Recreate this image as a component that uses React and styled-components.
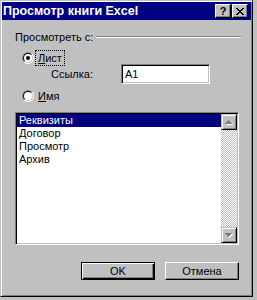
import React from "react";
import styled, { createGlobalStyle } from "styled-components";

const GlobalStyle = createGlobalStyle`
  body {
    margin: 0;
    background: #c0c0c0;
    font-family: "Liberation Sans", Arial, sans-serif;
    font-size: 11px;
    color: #000;
  }
`;

const Dialog = styled.div`
  width: 253px;
  height: 297px;
  box-sizing: border-box;
  border: 1px solid;
  border-color: #c0c0c0 #000 #000 #c0c0c0;
  box-shadow: inset 1px 1px #fff, inset -1px -1px #808080;
  padding: 1px;
  background: #c0c0c0;
  display: flex;
  flex-direction: column;
`;

const TitleBar = styled.div`
  height: 18px;
  flex: none;
  background: #000080;
  color: #fff;
  font-weight: bold;
  font-size: 12.5px;
  display: flex;
  align-items: center;
  padding: 0 3px 0 1px;
`;

const TitleText = styled.span`
  white-space: nowrap;
`;

const CaptionButtons = styled.div`
  margin-left: auto;
  display: flex;
  gap: 1px;
`;

const CaptionButton = styled.div`
  width: 16px;
  height: 14px;
  box-sizing: border-box;
  background: #c0c0c0;
  border: 1px solid;
  border-color: #fff #000 #000 #fff;
  box-shadow: inset -1px -1px #808080;
  color: #000;
  font-size: 11px;
  font-weight: bold;
  line-height: 12px;
  display: flex;
  align-items: center;
  justify-content: center;
`;

const Body = styled.div`
  flex: 1;
  display: flex;
  flex-direction: column;
  padding: 0 12px 0 13px;
`;

const GroupHeader = styled.div`
  margin-top: 10px;
  height: 14px;
  display: flex;
  align-items: center;
  margin-right: -2px;
`;

const GroupLine = styled.div`
  flex: 1;
  margin-left: 3px;
  height: 0;
  border-top: 1px solid #808080;
  border-bottom: 1px solid #fff;
`;

const RadioRow = styled.div`
  margin-top: ${(p) => p.$gap}px;
  height: 12px;
  display: flex;
  align-items: center;
  padding-left: 7px;
`;

const RadioCircle = styled.span`
  position: relative;
  flex: none;
  width: 12px;
  height: 12px;
  box-sizing: border-box;
  border-radius: 50%;
  border: 1px solid;
  border-color: #808080 #fff #fff #808080;
  background: #fff;
  &::before {
    content: "";
    position: absolute;
    inset: 0;
    border-radius: 50%;
    border: 1px solid;
    border-color: #000 #c0c0c0 #c0c0c0 #000;
  }
  &::after {
    content: "";
    display: ${(p) => (p.$checked ? "block" : "none")};
    position: absolute;
    left: 3px;
    top: 3px;
    width: 4px;
    height: 4px;
    border-radius: 50%;
    background: #000;
  }
`;

const RadioLabel = styled.span`
  margin-left: 3px;
  padding: 0 1px;
  line-height: 12px;
  outline: ${(p) => (p.$focused ? "1px dotted #000" : "none")};
  outline-offset: 1px;
`;

const FieldRow = styled.div`
  height: 20px;
  display: flex;
  align-items: center;
  padding-left: 36px;
`;

const FieldLabel = styled.span`
  width: 70px;
`;

const TextBox = styled.div`
  width: 89px;
  height: 20px;
  box-sizing: border-box;
  background: #fff;
  border: 1px solid;
  border-color: #808080 #fff #fff #808080;
  box-shadow: inset 1px 1px #000, inset -1px -1px #c0c0c0;
  padding-left: 3px;
  display: flex;
  align-items: center;
`;

const ListBox = styled.div`
  margin-top: 10px;
  width: 224px;
  height: 133px;
  box-sizing: border-box;
  background: #fff;
  border: 1px solid;
  border-color: #808080 #fff #fff #808080;
  box-shadow: inset 1px 1px #000, inset -1px -1px #c0c0c0;
  padding: 1px;
  display: flex;
`;

const Items = styled.div`
  flex: 1;
  display: flex;
  flex-direction: column;
`;

const Item = styled.div`
  height: 13px;
  line-height: 13px;
  padding-left: 2px;
  background: ${(p) => (p.$selected ? "#000080" : "transparent")};
  color: ${(p) => (p.$selected ? "#fff" : "#000")};
`;

const ScrollBar = styled.div`
  width: 16px;
  display: flex;
  flex-direction: column;
`;

const ScrollButton = styled.div`
  width: 16px;
  height: 16px;
  box-sizing: border-box;
  background: #c0c0c0;
  border: 1px solid;
  border-color: #c0c0c0 #000 #000 #c0c0c0;
  box-shadow: inset 1px 1px #fff, inset -1px -1px #808080;
  display: flex;
`;

const Track = styled.div`
  flex: 1;
  background-image: conic-gradient(#fff 25%, #c0c0c0 0 50%, #fff 0 75%, #c0c0c0 0);
  background-size: 2px 2px;
`;

const ButtonRow = styled.div`
  margin-top: 17px;
  width: 224px;
  display: flex;
  justify-content: flex-end;
  gap: 10px;
`;

const Button = styled.div`
  width: 74px;
  height: 18px;
  box-sizing: border-box;
  display: flex;
  align-items: center;
  justify-content: center;
  border: 1px solid;
  border-color: ${(p) => (p.$default ? "#000" : "#fff #000 #000 #fff")};
  box-shadow: ${(p) =>
    p.$default
      ? "inset 1px 1px #fff, inset -1px -1px #000, inset -2px -2px #808080"
      : "inset -1px -1px #808080"};
`;

const upRows = "M6 5h1v1h-1z M5 6h3v1h-3z M4 7h5v1h-5z M3 8h7v1h-7z";
const downRows = "M3 5h7v1h-7z M4 6h5v1h-5z M5 7h3v1h-3z M6 8h1v1h-1z";

const Arrow = ({ d }) => (
  <svg width="14" height="14" viewBox="0 0 14 14" shapeRendering="crispEdges">
    <path d={d} fill="#fff" transform="translate(1 1)" />
    <path d={d} fill="#808080" />
  </svg>
);

const CloseGlyph = () => (
  <svg width="8" height="7" viewBox="0 0 8 7" shapeRendering="crispEdges">
    <path
      d="M0 0h2v1h-2z M6 0h2v1h-2z M1 1h2v1h-2z M5 1h2v1h-2z M2 2h4v1h-4z M3 3h2v1h-2z M2 4h4v1h-4z M1 5h2v1h-2z M5 5h2v1h-2z M0 6h2v1h-2z M6 6h2v1h-2z"
      fill="#000"
    />
  </svg>
);

const sheets = ["Реквизиты", "Договор", "Просмотр", "Архив"];

export default function App() {
  return (
    <>
      <GlobalStyle />
      <Dialog>
        <TitleBar>
          <TitleText>Просмотр книги Excel</TitleText>
          <CaptionButtons>
            <CaptionButton>?</CaptionButton>
            <CaptionButton>
              <CloseGlyph />
            </CaptionButton>
          </CaptionButtons>
        </TitleBar>
        <Body>
          <GroupHeader>
            <span>Просмотреть с:</span>
            <GroupLine />
          </GroupHeader>
          <RadioRow $gap={8}>
            <RadioCircle $checked />
            <RadioLabel $focused>
              <u>Л</u>ист
            </RadioLabel>
          </RadioRow>
          <FieldRow>
            <FieldLabel>Ссылка:</FieldLabel>
            <TextBox>A1</TextBox>
          </FieldRow>
          <RadioRow $gap={6}>
            <RadioCircle />
            <RadioLabel>
              <u>И</u>мя
            </RadioLabel>
          </RadioRow>
          <ListBox>
            <Items>
              {sheets.map((s, i) => (
                <Item key={s} $selected={i === 0}>
                  {s}
                </Item>
              ))}
            </Items>
            <ScrollBar>
              <ScrollButton>
                <Arrow d={upRows} />
              </ScrollButton>
              <Track />
              <ScrollButton>
                <Arrow d={downRows} />
              </ScrollButton>
            </ScrollBar>
          </ListBox>
          <ButtonRow>
            <Button $default>OK</Button>
            <Button>Отмена</Button>
          </ButtonRow>
        </Body>
      </Dialog>
    </>
  );
}
